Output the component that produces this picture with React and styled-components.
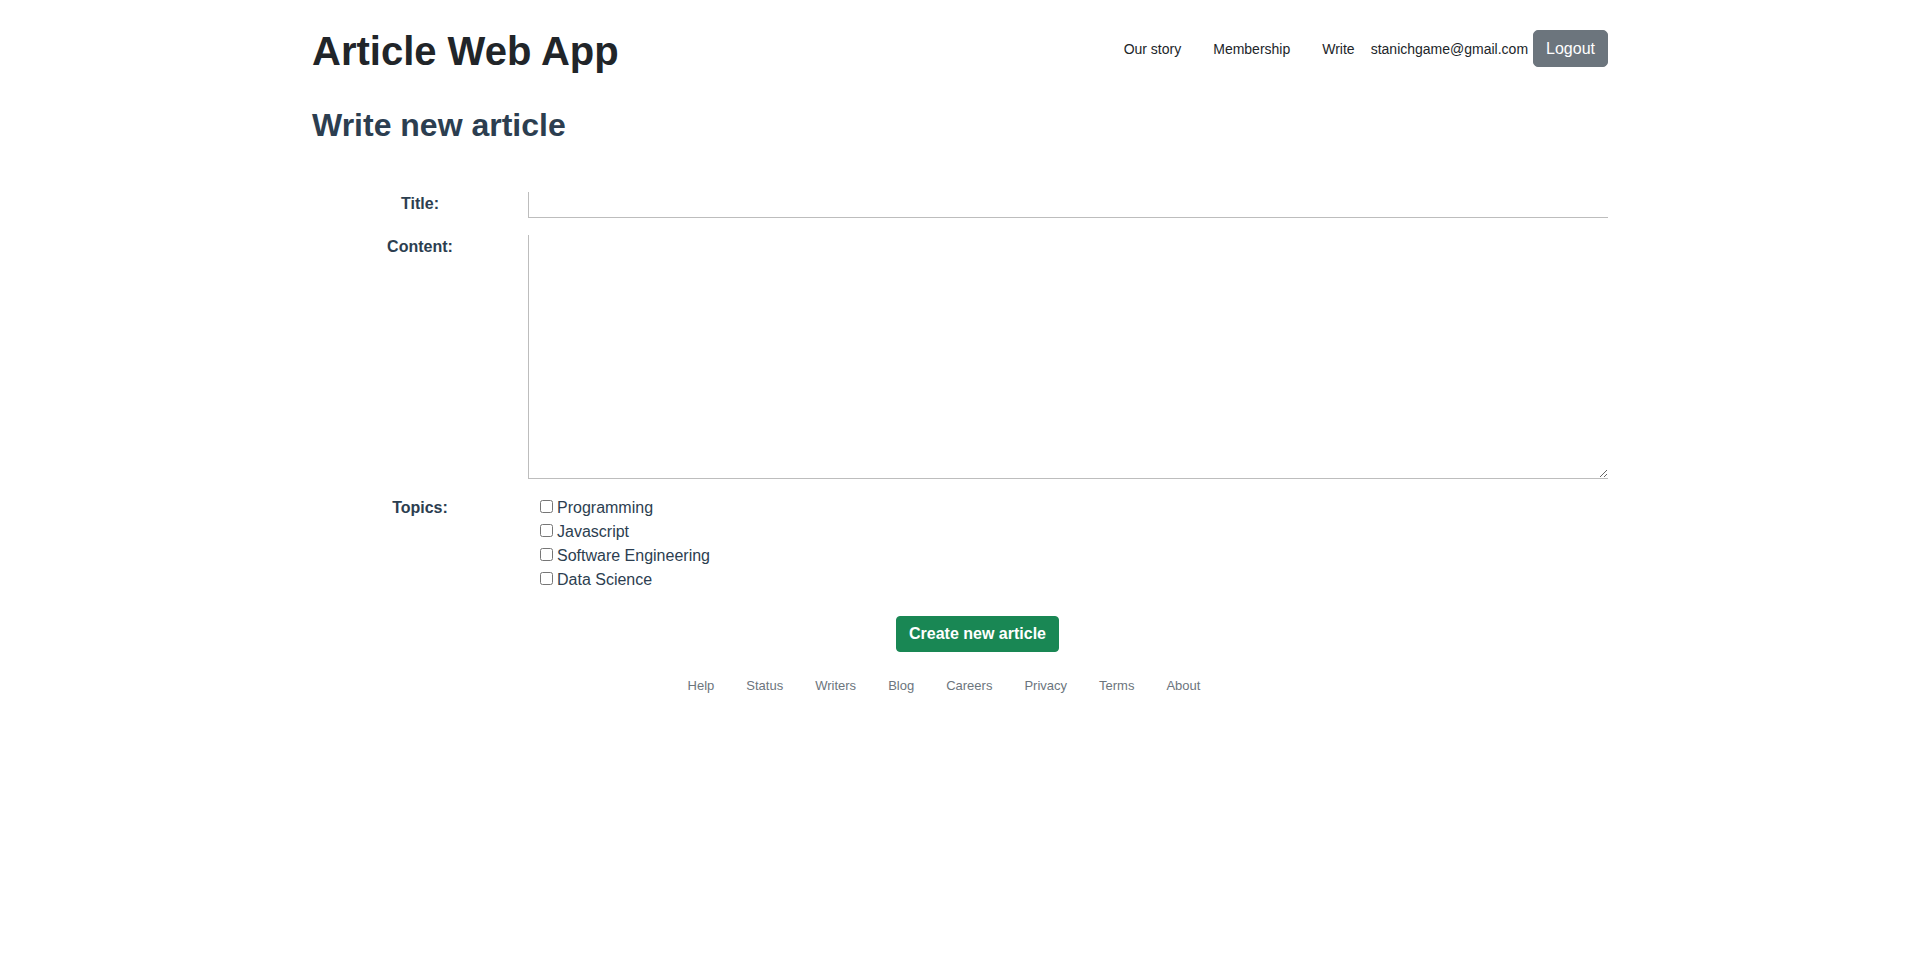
import React from 'react'
import styled, { createGlobalStyle } from 'styled-components'

const topics = ['Programming', 'Javascript', 'Software Engineering', 'Data Science'];
const navLinks = ['Our story', 'Membership', 'Write'];
const footerLinks = ['Help', 'Status', 'Writers', 'Blog', 'Careers', 'Privacy', 'Terms', 'About'];

function App() {
    return (
        <>
            <GlobalStyle />
            <Container>
                <Header>
                    <Brand>Article Web App</Brand>
                    <Nav>
                        {navLinks.map((link) => (
                            <NavLink key={link} href="#">{link}</NavLink>
                        ))}
                        <Email>stanichgame@gmail.com</Email>
                        <LogoutButton type="button">Logout</LogoutButton>
                    </Nav>
                </Header>

                <PageTitle>Write new article</PageTitle>

                <Form onSubmit={(e) => e.preventDefault()}>
                    <Label htmlFor="title">Title:</Label>
                    <TitleInput id="title" type="text" />

                    <Label htmlFor="content">Content:</Label>
                    <ContentArea id="content" />

                    <Label as="span">Topics:</Label>
                    <TopicList>
                        {topics.map((topic) => (
                            <TopicItem key={topic}>
                                <input type="checkbox" />{topic}
                            </TopicItem>
                        ))}
                    </TopicList>

                    <Actions>
                        <SubmitButton type="submit">Create new article</SubmitButton>
                    </Actions>
                </Form>

                <Footer>
                    {footerLinks.map((link) => (
                        <FooterLink key={link} href="#">{link}</FooterLink>
                    ))}
                </Footer>
            </Container>
        </>
    )
}

const GlobalStyle = createGlobalStyle`
    body {
        margin: 0;
        background: #fff;
        color: #212529;
        font-family: "Liberation Sans", Arial, sans-serif;
        font-size: 16px;
    }
    * {
        box-sizing: border-box;
    }
`

const Container = styled.div`
    width: 1296px;
    margin: 0 auto;
    padding-top: 27px;
`

const Header = styled.header`
    display: flex;
    justify-content: space-between;
    align-items: flex-start;
`

const Brand = styled.h1`
    margin: 0;
    font-size: 40px;
    line-height: 48px;
    font-weight: 700;
    color: #212529;
`

const Nav = styled.nav`
    display: flex;
    align-items: center;
    height: 37px;
    margin-top: 3px;
`

const NavLink = styled.a`
    padding: 0 16px;
    font-size: 14px;
    color: #212529;
    text-decoration: none;
`

const Email = styled.span`
    font-size: 14px;
    color: #212529;
`

const LogoutButton = styled.button`
    margin-left: 5px;
    height: 37px;
    padding: 0 12px;
    border: 1px solid #6c757d;
    border-radius: 5px;
    background: #6c757d;
    color: #fff;
    font-family: inherit;
    font-size: 16px;
    cursor: pointer;
`

const PageTitle = styled.h2`
    margin: 31px 0 0;
    font-size: 32px;
    line-height: 38px;
    font-weight: 700;
    color: #2c3e50;
`

const Form = styled.form`
    display: grid;
    grid-template-columns: 216px 1fr;
    row-gap: 17px;
    margin-top: 48px;
`

const Label = styled.label`
    text-align: center;
    font-weight: 700;
    line-height: 24px;
    color: #2c3e50;
`

const fieldBorder = `
    border: none;
    border-left: 1px solid #bdbdbd;
    border-bottom: 1px solid #bdbdbd;
    outline: none;
    font-family: inherit;
    font-size: 16px;
    width: 100%;
    background: transparent;
`

const TitleInput = styled.input`
    ${fieldBorder}
    height: 26px;
    padding: 0 6px;
`

const ContentArea = styled.textarea`
    ${fieldBorder}
    height: 244px;
    padding: 4px 6px;
    resize: vertical;
`

const TopicList = styled.div`
    display: flex;
    flex-direction: column;
    padding-left: 8px;
`

const TopicItem = styled.label`
    font-size: 16px;
    line-height: 24px;
    color: #2c3e50;
    & input {
        margin: 3px 4px 3px 4px;
    }
`

const Actions = styled.div`
    grid-column: 1 / -1;
    display: flex;
    justify-content: center;
    padding-left: 35px;
    margin-top: 7px;
`

const SubmitButton = styled.button`
    height: 36px;
    padding: 0 12px;
    border: 1px solid #198754;
    border-radius: 4px;
    background: #198754;
    color: #fff;
    font-family: inherit;
    font-size: 16px;
    font-weight: 700;
    cursor: pointer;
`

const Footer = styled.footer`
    display: flex;
    justify-content: center;
    margin-top: 24px;
`

const FooterLink = styled.a`
    margin-right: 32px;
    font-size: 13px;
    line-height: 19px;
    color: #6c757d;
    text-decoration: none;
`

export default App
